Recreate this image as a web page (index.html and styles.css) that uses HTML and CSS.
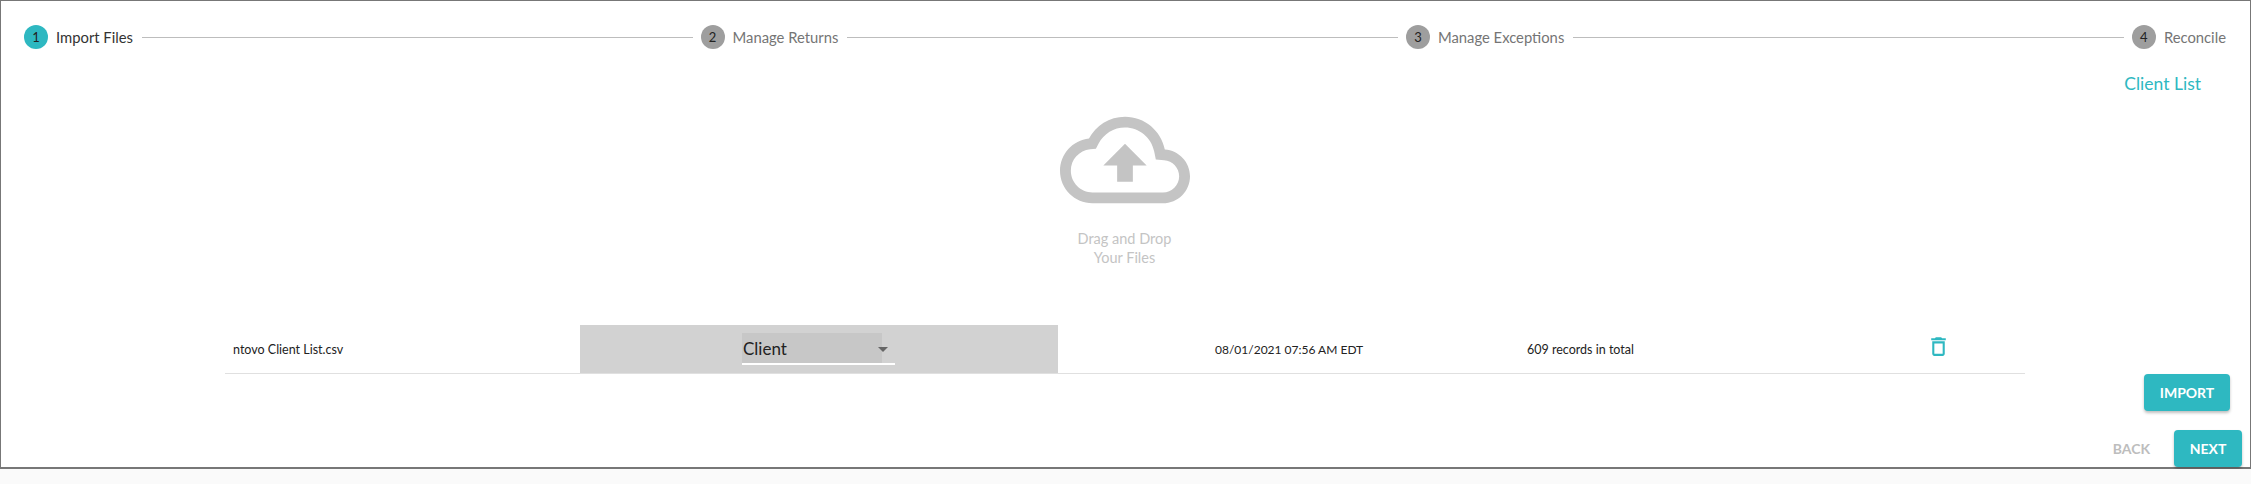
FILE: index.html
```html
<!DOCTYPE html>
<html lang="en">
  <head>
    <meta charset="UTF-8" />
    <title>Import Files</title>
    <link rel="stylesheet" href="styles.css">
  </head>
  <body>
    <div class="app">
      <div class="stepper">
        <div class="step active"><span class="step-num">1</span><span class="step-label">Import Files</span></div>
        <div class="step-line"></div>
        <div class="step"><span class="step-num">2</span><span class="step-label">Manage Returns</span></div>
        <div class="step-line"></div>
        <div class="step"><span class="step-num">3</span><span class="step-label">Manage Exceptions</span></div>
        <div class="step-line"></div>
        <div class="step"><span class="step-num">4</span><span class="step-label">Reconcile</span></div>
      </div>

      <div class="list-link-row">
        <a class="list-link">Client List</a>
      </div>

      <div class="dropzone">
        <svg class="cloud" viewBox="0 0 24 24" width="130" height="130">
          <path d="M19.35 10.04C18.67 6.59 15.64 4 12 4 9.11 4 6.6 5.64 5.35 8.04 2.34 8.36 0 10.91 0 14c0 3.31 2.69 6 6 6h13c2.76 0 5-2.24 5-5 0-2.64-2.05-4.78-4.65-4.96zM19 18H6c-2.21 0-4-1.79-4-4 0-2.05 1.53-3.76 3.56-3.97l1.07-.11.5-.95C8.08 7.14 9.94 6 12 6c2.62 0 4.88 1.86 5.39 4.43l.3 1.5 1.53.11c1.56.1 2.78 1.41 2.78 2.96 0 1.65-1.35 3-3 3zM8 13h2.55v3h2.9v-3H16l-4-4z" />
        </svg>
        <div class="drop-text">Drag and Drop<br />Your Files</div>
      </div>

      <div class="file-row">
        <div class="file-name">ntovo Client List.csv</div>
        <div class="type-cell">
          <div class="type-select">
            <span class="type-value">Client</span>
            <span class="type-arrow"></span>
          </div>
        </div>
        <div class="file-date">08/01/2021 07:56 AM EDT</div>
        <div class="file-count">609 records in total</div>
        <div class="file-delete">
          <svg viewBox="0 0 24 24" width="25" height="25">
            <path d="M6 19c0 1.1.9 2 2 2h8c1.1 0 2-.9 2-2V7H6v12zM8 9h8v10H8V9zm7.5-5l-1-1h-5l-1 1H5v2h14V4z" />
          </svg>
        </div>
      </div>

      <div class="import-row">
        <button class="btn btn-import">IMPORT</button>
      </div>

      <div class="nav-row">
        <button class="btn-back">BACK</button>
        <button class="btn btn-next">NEXT</button>
      </div>
    </div>
  </body>
</html>
```

FILE: styles.css
```css
body {
  margin: 0;
  background-color: #fafafa;
  font-family: Lato, "Open Sans", sans-serif;
}
.app {
  box-sizing: border-box;
  height: 469px;
  background-color: white;
  border: 1px solid #777;
  border-bottom-width: 2px;
  display: flex;
  flex-direction: column;
}
.stepper {
  display: flex;
  align-items: center;
  padding: 24px 24px 0 23px;
}
.step {
  display: flex;
  align-items: center;
  gap: 8px;
  font-size: 14.8px;
  color: #757575;
}
.step.active {
  color: #333;
}
.step-num {
  width: 24px;
  height: 24px;
  border-radius: 50%;
  background-color: #9e9e9e;
  color: #222;
  font-size: 13px;
  display: flex;
  align-items: center;
  justify-content: center;
}
.step.active .step-num {
  background-color: #2eb8c1;
}
.step-line {
  flex: 1;
  height: 1px;
  background-color: #bdbdbd;
  margin: 0 8px 0 9px;
}
.list-link-row {
  display: flex;
  justify-content: flex-end;
  padding: 23px 49px 0 0;
}
.list-link {
  color: #2eb8c1;
  font-size: 17.5px;
  line-height: 24px;
}
.dropzone {
  display: flex;
  flex-direction: column;
  align-items: center;
  margin-top: -1px;
  padding-right: 2px;
}
.cloud {
  fill: #c4c4c4;
}
.drop-text {
  color: #c4c4c4;
  font-size: 14.5px;
  line-height: 19px;
  text-align: center;
  margin-top: 4px;
}
.file-row {
  display: grid;
  grid-template-columns: 355px 478px 469px 405px 93px;
  width: 1800px;
  margin: 58px 0 0 224px;
  height: 49px;
  box-sizing: border-box;
  border-bottom: 1px solid #e0e0e0;
  align-items: center;
  font-size: 12.5px;
  color: #222;
}
.file-name {
  padding-left: 8px;
}
.type-cell {
  align-self: stretch;
  background-color: #d2d2d2;
  padding: 8px 0 0 162px;
}
.type-select {
  box-sizing: border-box;
  width: 153px;
  height: 32px;
  border-bottom: 2px solid white;
  display: flex;
  align-items: center;
  position: relative;
  background: linear-gradient(to right, #c7c7c7 140px, transparent 140px);
}
.type-value {
  font-size: 17px;
  color: #222;
  padding-left: 1px;
}
.type-arrow {
  position: absolute;
  left: 136px;
  top: 14px;
  border-left: 5px solid transparent;
  border-right: 5px solid transparent;
  border-top: 5px solid #666;
}
.file-date {
  padding-left: 157px;
  font-size: 12px;
}
.file-delete {
  height: 25px;
  margin-left: -6px;
  align-self: start;
  margin-top: 9px;
}
.file-delete svg {
  fill: #2eb8c1;
  display: block;
}
.import-row {
  display: flex;
  justify-content: flex-end;
  padding-right: 20px;
}
.btn {
  height: 37px;
  border: none;
  border-radius: 4px;
  background-color: #2eb8c1;
  color: white;
  font-family: inherit;
  font-size: 14px;
  font-weight: 700;
  padding: 0;
  box-shadow: 0 2px 3px rgba(0, 0, 0, 0.25);
}
.btn-import {
  width: 86px;
}
.btn-next {
  width: 68px;
}
.nav-row {
  display: flex;
  justify-content: flex-end;
  align-items: center;
  gap: 24px;
  margin-top: 19px;
  padding-right: 8px;
}
.btn-back {
  border: none;
  background: none;
  padding: 0;
  color: #bdbdbd;
  font-family: inherit;
  font-size: 14px;
  font-weight: 700;
}
```
